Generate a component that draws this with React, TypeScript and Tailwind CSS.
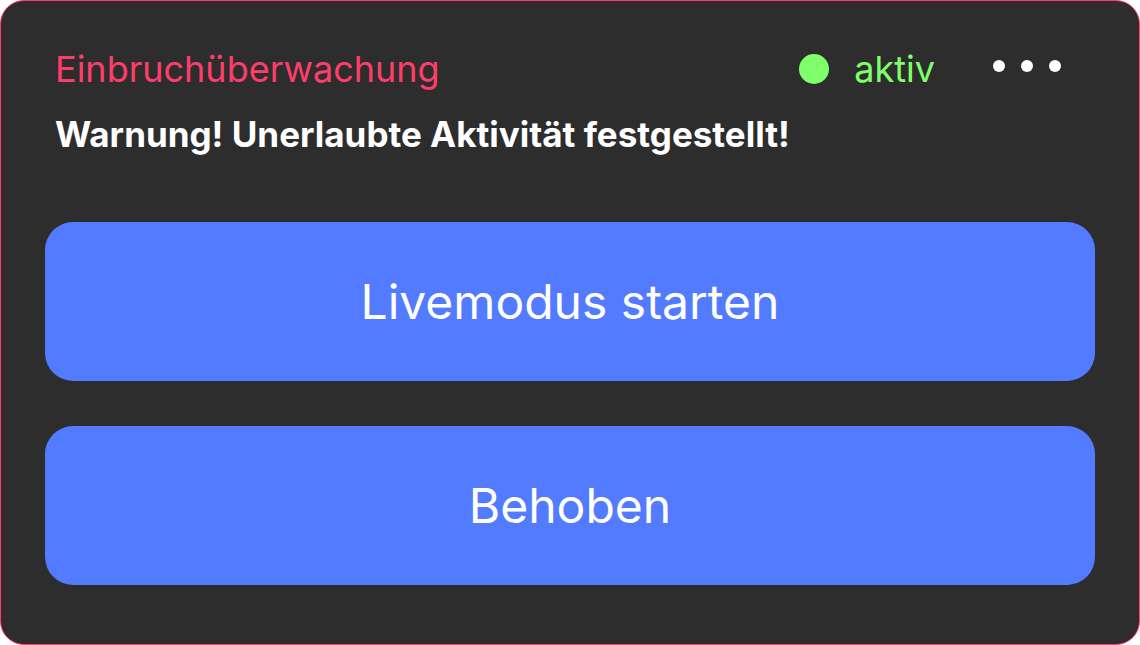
const font = { fontFamily: "Inter, 'Noto Sans', sans-serif" };

function ActionButton({ label }: { label: string }) {
  return (
    <button className="flex h-[159px] w-full items-center justify-center rounded-[28px] bg-[#537bff] text-[48px] font-normal text-white">
      {label}
    </button>
  );
}

export default function App() {
  return (
    <div className="h-[645px] w-[1140px] bg-white" style={font}>
      <div className="flex h-full w-full flex-col rounded-[24px] border border-[#ff3d6b] bg-[#2d2d2d]">
        <div className="flex items-center justify-between pl-[54px] pr-[78px] pt-[44px]">
          <h1 className="text-[36px] leading-[48px] text-[#ff3d6b]">
            Einbruchüberwachung
          </h1>
          <div className="flex items-center">
            <span className="h-[30px] w-[30px] rounded-full bg-[#7fff6a]" />
            <span className="ml-[25px] text-[36px] leading-[48px] text-[#7fff6a]">
              aktiv
            </span>
            <div className="mb-[6px] ml-[58px] flex items-center gap-[16px]">
              <span className="h-[12px] w-[12px] rounded-full bg-white" />
              <span className="h-[12px] w-[12px] rounded-full bg-white" />
              <span className="h-[12px] w-[12px] rounded-full bg-white" />
            </div>
          </div>
        </div>
        <p className="pl-[54px] pt-[21px] text-[35px] font-bold leading-[40px] text-white">
          Warnung! Unerlaubte Aktivität festgestellt!
        </p>
        <div className="flex flex-col gap-[45px] px-[44px] pt-[68px]">
          <ActionButton label="Livemodus starten" />
          <ActionButton label="Behoben" />
        </div>
      </div>
    </div>
  );
}
